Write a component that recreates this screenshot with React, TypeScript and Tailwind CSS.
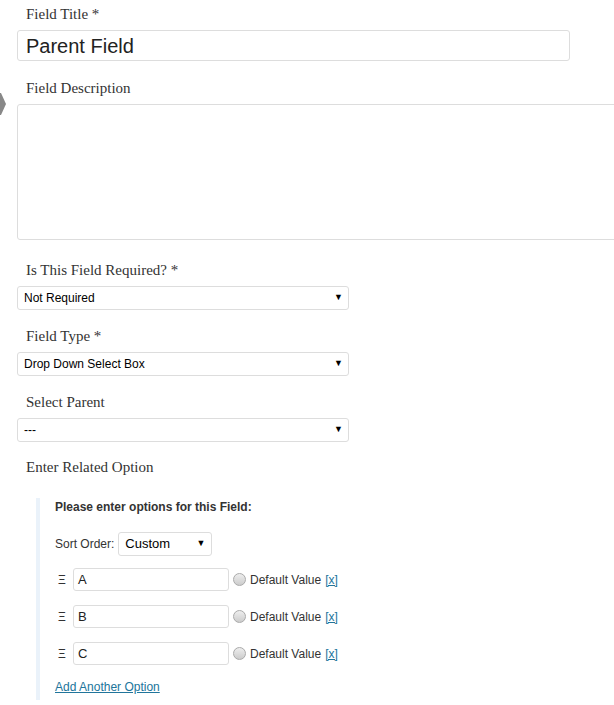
import React from "react";

type Option = { id: number; value: string };

const options: Option[] = [
  { id: 1, value: "A" },
  { id: 2, value: "B" },
  { id: 3, value: "C" },
];

function Label({ children }: { children: React.ReactNode }) {
  return (
    <div className="pl-[26px] text-[15px] leading-[18px] text-[#333] font-['Liberation_Serif',serif]">
      {children}
    </div>
  );
}

function FakeSelect({ value }: { value: string }) {
  return (
    <div className="ml-[17px] w-[332px] h-[24px] border border-[#ddd] rounded-[3px] bg-white flex items-center justify-between pl-[6px] pr-[5px] text-[12px] text-black">
      <span>{value}</span>
      <span className="text-[9px]">▼</span>
    </div>
  );
}

export default function App() {
  return (
    <div className="relative w-[614px] h-[705px] bg-white overflow-hidden font-['Liberation_Sans',Arial,sans-serif]">
      {/* collapse arrow on the left edge */}
      <svg className="absolute left-0 top-[93px]" width="6" height="22" viewBox="0 0 6 22">
        <polygon points="0,0 1,0 6,11 1,22 0,22" fill="#888" />
      </svg>

      <div className="pt-[5px]">
        <Label>Field Title *</Label>
        <div className="mt-[7px] ml-[17px] w-[553px] h-[31px] border border-[#ddd] rounded-[3px] flex items-center pl-[8px] text-[20px] text-[#222]">
          Parent Field
        </div>

        <div className="mt-[18px]">
          <Label>Field Description</Label>
        </div>
        <div className="mt-[7px] ml-[17px] w-[620px] h-[136px] border border-[#ddd] rounded-[3px]" />

        <div className="mt-[21px]">
          <Label>Is This Field Required? *</Label>
        </div>
        <div className="mt-[7px]">
          <FakeSelect value="Not Required" />
        </div>

        <div className="mt-[17px]">
          <Label>Field Type *</Label>
        </div>
        <div className="mt-[7px]">
          <FakeSelect value="Drop Down Select Box" />
        </div>

        <div className="mt-[17px]">
          <Label>Select Parent</Label>
        </div>
        <div className="mt-[7px]">
          <FakeSelect value="---" />
        </div>

        <div className="mt-[16px]">
          <Label>Enter Related Option</Label>
        </div>

        {/* options box */}
        <div className="mt-[22px] ml-[36px] border-l-4 border-[#eaf2fa] pl-[15px] pt-[2px] pb-[4px] text-[12px] text-[#333]">
          <div className="font-bold leading-[15px]">Please enter options for this Field:</div>

          <div className="mt-[17px] flex items-center">
            <span className="text-[#333]">Sort Order:</span>
            <div className="ml-[4px] w-[94px] h-[24px] border border-[#ddd] rounded-[3px] flex items-center justify-between pl-[6px] pr-[6px] text-[13px] text-black">
              <span>Custom</span>
              <span className="text-[9px]">▼</span>
            </div>
          </div>

          <div className="mt-[12px] flex flex-col gap-[14px]">
            {options.map((o) => (
              <div key={o.id} className="flex items-center h-[23px]">
                <span className="w-[18px] pl-[3px] text-[#333]">Ξ</span>
                <div className="w-[156px] h-[23px] border border-[#ddd] rounded-[3px] flex items-center pl-[4px] text-[13px] text-[#222]">
                  {o.value}
                </div>
                <span className="ml-[4px] w-[13px] h-[13px] rounded-full border border-[#aaa] bg-gradient-to-b from-[#eee] to-[#ccc]" />
                <span className="ml-[4px] text-[#333]">Default Value</span>
                <a className="ml-[4px] text-[#21759b] underline">[x]</a>
              </div>
            ))}
          </div>

          <a className="block mt-[13px] text-[#21759b] underline">Add Another Option</a>
        </div>
      </div>
    </div>
  );
}
